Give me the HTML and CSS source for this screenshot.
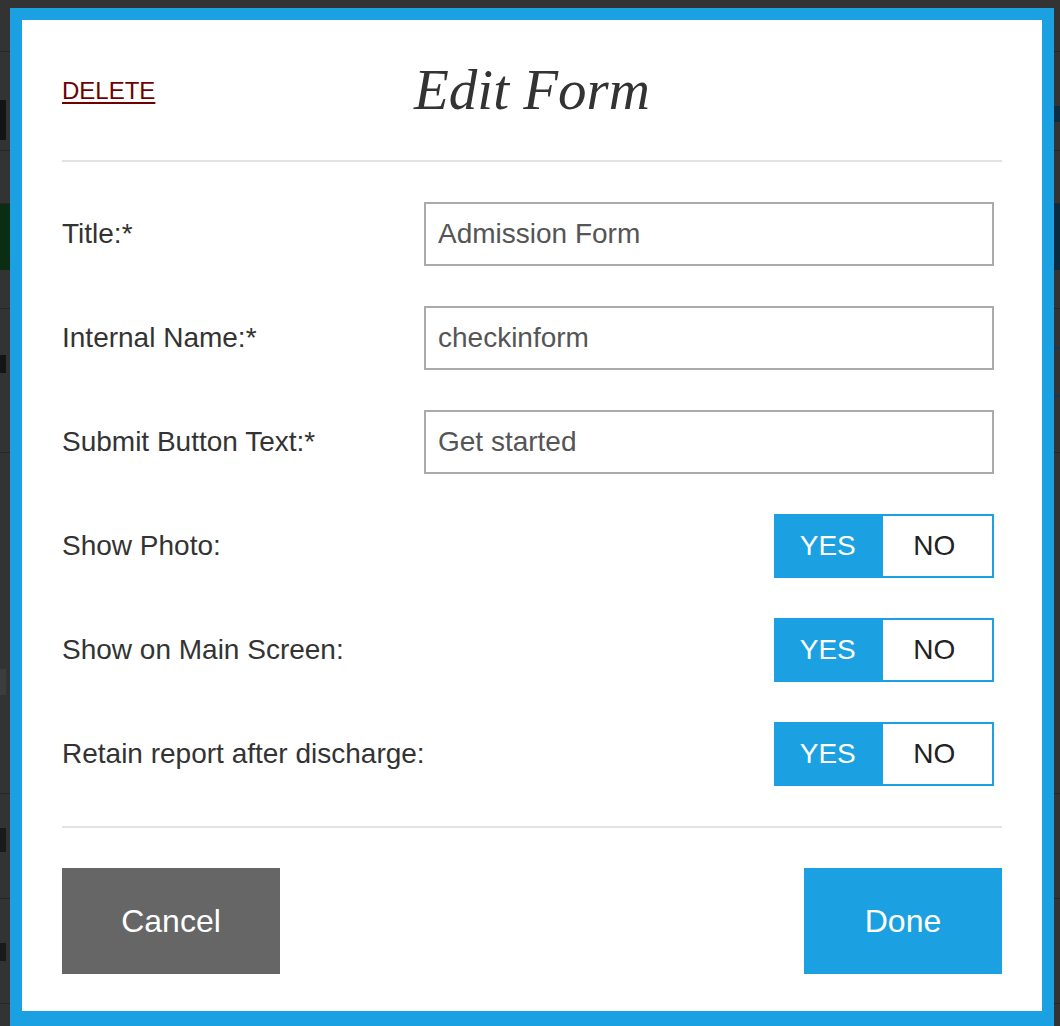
FILE: index.html
```html
<!DOCTYPE html>
<html>
<head>
<meta charset="utf-8">
<link rel="stylesheet" href="styles.css">
</head>
<body>
<div class="backdrop" aria-hidden="true">
  <div class="bg-row r1"></div>
  <div class="bg-row r2"><i class="mark mark-l m-big"></i><i class="mark mark-r m-blue"></i></div>
  <div class="bg-row r3"></div>
  <div class="bg-band"><i class="band-l"></i><i class="band-r"></i></div>
  <div class="bg-row r4"></div>
  <div class="bg-row r5"><i class="mark mark-l m-small"></i><i class="mark mark-r m-blue-box"></i></div>
  <div class="bg-row r6"><i class="mark mark-l m-grey"></i></div>
  <div class="bg-row r7"><i class="mark mark-l m-t"></i></div>
  <div class="bg-row r8"><i class="mark mark-l m-c"></i></div>
  <div class="bg-row r9"></div>
</div>

<div class="modal">
  <div class="modal-head">
    <a class="delete-link" href="#">DELETE</a>
    <h1 class="modal-title">Edit Form</h1>
  </div>
  <hr class="divider">
  <div class="form-rows">
    <div class="form-row">
      <label class="row-label">Title:*</label>
      <input class="text-input" type="text" value="Admission Form">
    </div>
    <div class="form-row">
      <label class="row-label">Internal Name:*</label>
      <input class="text-input" type="text" value="checkinform">
    </div>
    <div class="form-row">
      <label class="row-label">Submit Button Text:*</label>
      <input class="text-input" type="text" value="Get started">
    </div>
    <div class="form-row">
      <span class="row-label">Show Photo:</span>
      <div class="toggle"><span class="opt opt-on">YES</span><span class="opt opt-off">NO</span></div>
    </div>
    <div class="form-row">
      <span class="row-label">Show on Main Screen:</span>
      <div class="toggle"><span class="opt opt-on">YES</span><span class="opt opt-off">NO</span></div>
    </div>
    <div class="form-row">
      <span class="row-label">Retain report after discharge:</span>
      <div class="toggle"><span class="opt opt-on">YES</span><span class="opt opt-off">NO</span></div>
    </div>
  </div>
  <hr class="divider">
  <div class="actions">
    <button class="btn btn-cancel">Cancel</button>
    <button class="btn btn-done">Done</button>
  </div>
</div>
</body>
</html>
```
FILE: styles.css
```css
html, body {
  margin: 0;
  padding: 0;
}
body {
  background: #333;
  width: 1060px;
  height: 1026px;
  overflow: hidden;
  font-family: "Liberation Sans", Arial, sans-serif;
  position: relative;
}

/* page behind the overlay (only thin strips remain visible) */
.backdrop {
  display: flex;
  flex-direction: column;
}
.bg-row {
  position: relative;
  border-bottom: 1px solid #262626;
}
.r1 { height: 51px; }
.r2 { height: 98px; }
.r3 { height: 52px; }
.r4 { height: 38px; }
.r5 { height: 143px; }
.r6 { height: 340px; }
.r7 { height: 104px; }
.r8 { height: 104px; }
.r9 { height: 40px; }
.bg-band {
  height: 66px;
  display: flex;
  justify-content: space-between;
}
.band-l { width: 30px; background: #0b2e12; }
.band-r { width: 30px; background: #0a2a40; }
.mark {
  position: absolute;
  display: block;
}
.mark-l { left: 0; }
.mark-r { right: 0; }
.m-big { top: 48px; width: 6px; height: 40px; background: #141414; }
.m-blue { top: 54px; width: 6px; height: 16px; background: #0c2c44; }
.m-small { top: 46px; width: 6px; height: 18px; background: #151515; }
.m-blue-box { top: 38px; width: 6px; height: 46px; border-top: 2px solid #0c3a5c; border-bottom: 2px solid #0c3a5c; }
.m-grey { top: 216px; width: 6px; height: 26px; background: #3d3d3d; }
.m-t { top: 34px; width: 6px; height: 24px; background: #1a1a1a; }
.m-c { top: 44px; width: 6px; height: 18px; background: #1a1a1a; }

/* modal */
.modal {
  position: absolute;
  left: 10px;
  top: 8px;
  width: 940px;
  background: #fff;
  border: 12px solid #1ba1e2;
  border-bottom-width: 16px;
  padding: 40px 40px 37px;
}
.modal-head {
  position: relative;
  height: 60px;
  display: flex;
  align-items: center;
}
.delete-link {
  font-size: 24px;
  color: #6e0000;
  text-decoration: underline;
  text-underline-offset: 3px;
  position: relative;
  top: 1px;
}
.modal-title {
  position: absolute;
  left: 0;
  right: 0;
  top: 0;
  margin: 0;
  text-align: center;
  font-family: "Liberation Serif", "Times New Roman", serif;
  font-style: italic;
  font-weight: normal;
  font-size: 57px;
  line-height: 60px;
  color: #333;
  pointer-events: none;
}
.divider {
  border: none;
  height: 2px;
  background: #e2e2e2;
  margin: 40px 0;
}
.form-rows {
  display: flex;
  flex-direction: column;
  gap: 40px;
  padding-right: 8px;
}
.form-row {
  display: flex;
  align-items: center;
  justify-content: space-between;
  height: 64px;
}
.row-label {
  font-size: 28px;
  color: #333;
}
.text-input {
  width: 570px;
  height: 64px;
  box-sizing: border-box;
  border: 2px solid #aaa;
  border-radius: 0;
  padding: 0 12px;
  font-family: "Liberation Sans", Arial, sans-serif;
  font-size: 28px;
  color: #555;
  outline: none;
  margin: 0;
}
.toggle {
  display: flex;
  width: 220px;
  height: 64px;
  box-sizing: border-box;
  border: 2px solid #1ba1e2;
}
.opt {
  flex: 1;
  display: flex;
  align-items: center;
  justify-content: center;
  font-size: 28px;
  color: #222;
  background: #fff;
}
.opt-on {
  background: #1ba1e2;
  color: #fff;
  padding-right: 3px;
}
.opt-off {
  padding-right: 6px;
}
.actions {
  display: flex;
  justify-content: space-between;
}
.btn {
  height: 106px;
  border: none;
  border-radius: 0;
  font-family: "Liberation Sans", Arial, sans-serif;
  font-size: 32px;
  color: #fff;
  cursor: pointer;
  margin: 0;
  padding: 0;
}
.btn-cancel {
  width: 218px;
  background: #666;
}
.btn-done {
  width: 198px;
  background: #1ba1e2;
}
```
